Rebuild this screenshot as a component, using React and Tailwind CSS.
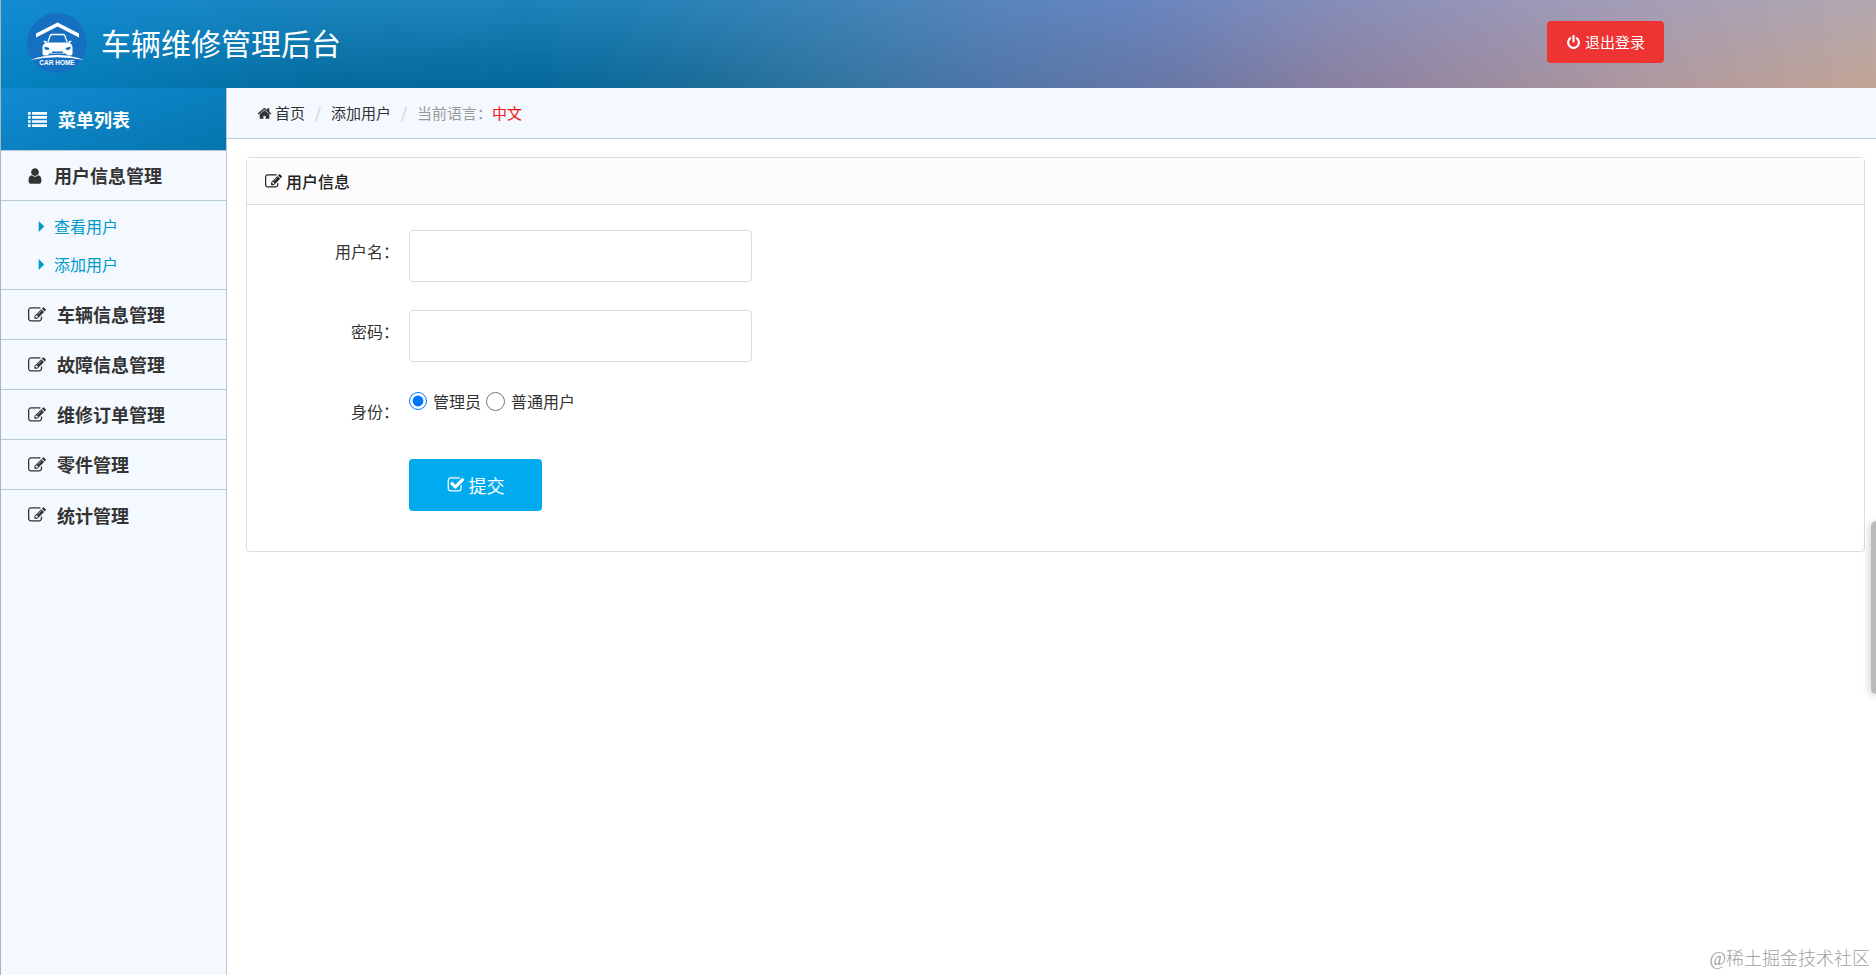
import { useState } from 'react';

const icons = {
  edit: 'M888 1184l116-116-152-152-116 116v56h96v96h56zm440-720q-16-16-33 1l-350 350q-17 17-1 33t33-1l350-350q17-17 1-33zm80 594v190q0 119-84.500 203.500t-203.500 84.500h-832q-119 0-203.500-84.500t-84.500-203.500v-832q0-119 84.500-203.500t203.500-84.500h832q63 0 117 25 15 7 18 23 3 17-9 29l-49 49q-14 14-32 8-23-6-45-6h-832q-66 0-113 47t-47 113v832q0 66 47 113t113 47h832q66 0 113-47t47-113v-126q0-13 9-22l64-64q15-15 35-7t20 29zm-96-738l288 288-672 672h-288v-288zm444 132l-92 92-288-288 92-92q28-28 68-28t68 28l152 152q28 28 28 68t-28 68z',
  check: 'M1472 930v318q0 119-84.500 203.500t-203.500 84.500h-832q-119 0-203.500-84.500t-84.500-203.500v-832q0-119 84.500-203.500t203.500-84.500h832q63 0 117 25 15 7 18 23 3 17-9 29l-49 49q-10 10-23 10-3 0-9-2-23-6-45-6h-832q-66 0-113 47t-47 113v832q0 66 47 113t113 47h832q66 0 113-47t47-113v-254q0-13 9-22l64-64q10-10 23-10 6 0 12 3 20 8 20 29zm231-489l-814 814q-24 24-57 24t-57-24l-430-430q-24-24-24-57t24-57l110-110q24-24 57-24t57 24l263 263 647-647q24-24 57-24t57 24l110 110q24 24 24 57t-24 57z',
  home: 'M1472 992v480q0 26-19 45t-45 19h-384v-384h-256v384h-384q-26 0-45-19t-19-45v-480q0-1 .5-3t.5-3l575-474 575 474q1 2 1 6zm223-69l-62 74q-8 9-21 11h-3q-13 0-21-7l-692-577-692 577q-12 8-24 7-13-2-21-11l-62-74q-8-10-7-23.500t11-21.500l719-599q32-26 76-26t76 26l244 204v-195q0-14 9-23t23-9h192q14 0 23 9t9 23v408l219 182q10 8 11 21.500t-7 23.500z',
  power: 'M1664 896q0 156-61 298t-164 245-245 164-298 61-298-61-245-164-164-245-61-298q0-182 80.500-343t226.500-270q43-32 95.500-25t83.500 50q32 42 24.500 94.500t-49.500 84.500q-98 74-151.500 181t-53.500 228q0 104 40.500 198.500t109.500 163.500 163.500 109.500 198.500 40.500 198.500-40.500 163.500-109.500 109.500-163.500 40.500-198.500q0-121-53.500-228t-151.500-181q-42-32-49.500-84.500t24.500-94.500q31-43 84-50t95 25q146 109 226.500 270t80.500 343zm-640-768v640q0 52-38 90t-90 38-90-38-38-90v-640q0-52 38-90t90-38 90 38 38 90z',
  user: 'M1536 1399q0 109-62.500 187t-150.500 78h-854q-88 0-150.500-78t-62.500-187q0-85 8.500-160.500t31.500-152 58.500-131 94-89 134.500-34.500q131 128 313 128t313-128q76 0 134.500 34.500t94 89 58.500 131 31.500 152 8.500 160.500zm-256-887q0 159-112.500 271.500t-271.500 112.500-271.500-112.500-112.500-271.500 112.500-271.500 271.500-112.500 271.500 112.500 112.500 271.500z',
  list: 'M0 192h256v250h-256zM384 192h1408v250h-1408zM0 576h256v250h-256zM384 576h1408v250h-1408zM0 960h256v250h-256zM384 960h1408v250h-1408zM0 1344h256v250h-256zM384 1344h1408v250h-1408z',
  caret: 'M600 320l576 576-576 576z',
};

const menus = ['车辆信息管理', '故障信息管理', '维修订单管理', '零件管理', '统计管理'];

function Icon({ name, className }) {
  return (
    <svg viewBox="0 0 1792 1792" fill="currentColor" className={className} aria-hidden="true">
      <path d={icons[name]} />
    </svg>
  );
}

function Logo() {
  return (
    <svg viewBox="0 0 60 60" className="h-15 w-15 shrink-0" aria-label="CAR HOME">
      <circle cx="30" cy="30" r="30" fill="#1670c2" />
      <path d="M9 20.500L30.500 9.500L52 20.500V24.500L30.500 13.500L9 24.500z" fill="#fff" />
      <path d="M21 29L23 23Q23.500 21.500 25 21.500H36Q37.500 21.500 38 23L40 29" fill="none" stroke="#fff" strokeWidth="1.300" />
      <path d="M16 28.500q2-1.500 4 .5l-1 1zM45 28.500q-2-1.500-4 .5l1 1z" fill="#fff" />
      <path d="M19 29.500H42Q45.500 31 45.500 35V40.500Q45.500 42.500 43.500 42.500H41Q39.500 42.500 39 40.500H22Q21.500 42.500 20 42.500H17.500Q15.500 42.500 15.500 40.500V35Q15.500 31 19 29.500z" fill="#fff" />
      <path d="M17.500 33.500l5 1.500q0 2-2 2t-3-1.500zM43.500 33.500l-5 1.500q0 2 2 2t3-1.500zM24.500 38.500h12l-1 1.500h-10z" fill="#1670c2" />
      <path d="M3 47Q30.500 37 57 47Q30.500 41.500 3 47z" fill="#fff" />
      <text x="30" y="51.500" textAnchor="middle" fontSize="6.500" fontWeight="700" fill="#fff" fontFamily="Liberation Sans, sans-serif">
        CAR HOME
      </text>
    </svg>
  );
}

function Header() {
  return (
    <header className="relative flex h-22 items-center justify-between bg-[linear-gradient(90deg,#0583c0_0%,#046a9c_18%,#05699a_29%,#1a6c98_37%,#3375a0_45%,#5176a8_53%,#6b78a5_63%,#8a80a0_71%,#9a8a9f_78%,#b0999f_88%,#c3a595_100%)]">
      <div className="absolute inset-0 bg-[linear-gradient(90deg,#128bd4_0%,#1b84bd_18%,#2082b8_32%,#4084b8_45%,#5885bb_53%,#6685c0_60%,#858db8_71%,#9c98b8_82%,#b2a8b0_100%)] mask-[linear-gradient(to_bottom,black,transparent)]" />
      <div className="relative flex items-center gap-[14px] pb-[2px] pl-[26px]">
        <Logo />
        <h1 className="pb-[2px] text-[30px] leading-9 text-white">车辆维修管理后台</h1>
      </div>
      <button className="relative mr-53 mb-1 flex h-[42px] items-center gap-1 rounded bg-[#ee3333] px-[19px] text-[15px] text-white">
        <Icon name="power" className="h-[15px] w-[15px]" />
        退出登录
      </button>
    </header>
  );
}

function Sidebar() {
  return (
    <aside className="w-[226px] shrink-0 border-r border-[#b5c9d5] bg-[#f3f9ff]">
      <h2 className="flex h-[63px] items-center gap-[11px] border-b border-[#b5c9d5] bg-[linear-gradient(160deg,#128bd4,#0476ae)] pl-[27px] text-[18px] font-bold text-white">
        <Icon name="list" className="h-[19px] w-[19px]" />
        菜单列表
      </h2>
      <nav>
        <a href="#user" className="flex h-[50px] items-center gap-[10px] border-b border-[#b5c9d5] pl-[25px] text-[18px] font-bold text-[#333]">
          <Icon name="user" className="h-[18px] w-[18px]" />
          用户信息管理
        </a>
        <ul className="border-b border-[#b5c9d5] py-[6px] text-[16px] text-[#0099cc]">
          {['查看用户', '添加用户'].map((text) => (
            <li key={text}>
              <a href="#user" className="flex h-[38px] items-center gap-1 pl-8">
                <Icon name="caret" className="h-[17px] w-[17px]" />
                {text}
              </a>
            </li>
          ))}
        </ul>
        {menus.map((text) => (
          <a
            key={text}
            href="#menu"
            className="flex h-[50px] items-center gap-[11px] border-b border-[#b5c9d5] pl-[27px] text-[18px] font-bold text-[#333] last:border-b-0"
          >
            <Icon name="edit" className="h-[18px] w-[18px]" />
            {text}
          </a>
        ))}
      </nav>
    </aside>
  );
}

function Breadcrumb() {
  return (
    <nav className="flex h-[51px] items-center border-b border-[#b5cfd5] bg-[#f3f9ff] pl-[30px] text-[15px] text-[#333]">
      <a href="#home" className="flex items-center gap-[3px]">
        <Icon name="home" className="h-[15px] w-[15px]" />
        首页
      </a>
      <span className="w-[26px] text-center text-[#ccc]">/</span>
      <a href="#add">添加用户</a>
      <span className="w-[26px] text-center text-[#ccc]">/</span>
      <span className="text-[#999]">当前语言：</span>
      <span className="text-[#e11]">中文</span>
    </nav>
  );
}

export default function App() {
  const [form, setForm] = useState({ name: '', password: '', role: 'admin' });
  const update = (event) => setForm((current) => ({ ...current, [event.target.name]: event.target.value }));

  return (
    <div className="relative flex min-h-screen flex-col overflow-hidden border-l border-[#a9b4bb] bg-white font-['Noto_Sans_CJK_SC',sans-serif]">
      <Header />
      <div className="flex flex-1">
        <Sidebar />
        <main className="flex-1">
          <Breadcrumb />
          <section className="mt-[18px] mr-[11px] ml-[19px] rounded border border-[#ddd]">
            <h3 className="flex h-[47px] items-center gap-1 border-b border-[#ddd] bg-[#fcfcfc] pl-[18px] text-[16px] font-medium text-[#222]">
              <Icon name="edit" className="h-[17px] w-[17px]" />
              用户信息
            </h3>
            <form className="flex flex-col gap-7 pt-[25px] pb-10 text-[16px] text-[#333]" onSubmit={(event) => event.preventDefault()}>
              <div className="flex gap-[10px]">
                <label htmlFor="name" className="w-[152px] pt-[9px] text-right">用户名：</label>
                <input id="name" name="name" value={form.name} onChange={update} className="h-[52px] w-[343px] rounded border border-[#ddd] px-3 outline-none" />
              </div>
              <div className="flex gap-[10px]">
                <label htmlFor="password" className="w-[152px] pt-[9px] text-right">密码：</label>
                <input id="password" name="password" type="password" value={form.password} onChange={update} className="h-[52px] w-[343px] rounded border border-[#ddd] px-3 outline-none" />
              </div>
              <div className="flex h-10 gap-[10px]">
                <span className="w-[152px] pt-[9px] text-right">身份：</span>
                <div className="flex h-[22px] items-center gap-[5px]">
                  <label className="flex items-center gap-[6px]">
                    <input type="radio" name="role" value="admin" checked={form.role === 'admin'} onChange={update} className="h-[18px] w-[18px] accent-[#0075ff]" />
                    管理员
                  </label>
                  <label className="flex items-center gap-[6px]">
                    <input type="radio" name="role" value="user" checked={form.role === 'user'} onChange={update} className="h-[19px] w-[19px] accent-[#0075ff]" />
                    普通用户
                  </label>
                </div>
              </div>
              <button type="submit" className="mt-px ml-[162px] flex h-[52px] w-[133px] items-center justify-center gap-1 rounded bg-[#00aaee] text-[18px] text-white">
                <Icon name="check" className="h-[18px] w-[18px]" />
                提交
              </button>
            </form>
          </section>
        </main>
      </div>
      <div className="absolute top-[521px] right-0 h-[173px] w-[5px] rounded-l-md bg-[#bbb] shadow-[0_2px_8px_rgba(0,0,0,0.3)]" />
      <p className="absolute right-[6px] bottom-1 font-['Liberation_Serif','Noto_Sans_CJK_SC',serif] text-[18px] leading-6 font-light text-[#a0a0a0]">
        @稀土掘金技术社区
      </p>
    </div>
  );
}
